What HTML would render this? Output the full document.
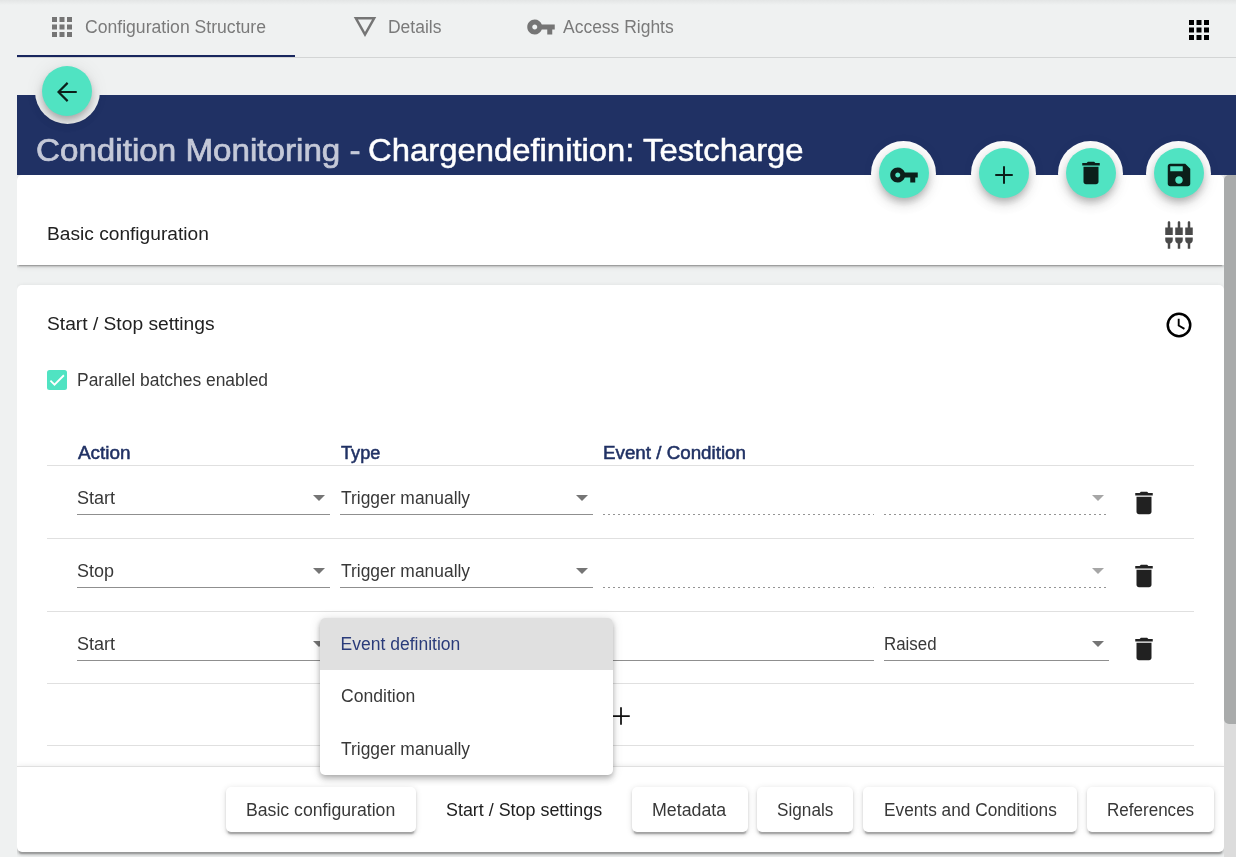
<!DOCTYPE html>
<html lang="en">
<head>
<meta charset="utf-8">
<title>Condition Monitoring - Chargendefinition: Testcharge</title>
<style>
*{box-sizing:border-box;margin:0;padding:0}
html,body{width:1236px;height:857px;overflow:hidden}
body{position:relative;background:#eff1f1;font-family:"Liberation Sans",Arial,sans-serif;font-size:17.5px;color:#333}
.a{position:absolute}
.t{position:absolute;white-space:nowrap;line-height:24px;transform-origin:0 50%;display:block}
svg{position:absolute;display:block;overflow:visible}
.topshade{left:0;top:0;width:1236px;height:5px;background:linear-gradient(#e3e5e5,#eff1f1)}
.tabline{left:17px;top:57px;width:1219px;height:1px;background:#d3d5d5}
.inkbar{left:17px;top:54.75px;width:278px;height:2.5px;background:#18265e}
.header{left:17px;top:95px;width:1219px;height:80px;background:#203164}
.ring{width:65px;height:65px;border-radius:50%}
.fab{width:50px;height:50px;border-radius:50%;background:#50e3c2;box-shadow:0 4px 6px -1px rgba(0,0,0,.18),0 7px 12px 0 rgba(0,0,0,.12),0 1px 20px 0 rgba(0,0,0,.08)}
.panel{background:#fff}
.p1{left:17px;top:175px;width:1207px;height:90px;border-radius:5px 5px 0 0;box-shadow:0 3px 1px -2px rgba(0,0,0,.2),0 2px 2px 0 rgba(0,0,0,.14),0 1px 6px 0 rgba(0,0,0,.12);clip-path:inset(0 0 -20px 0)}
.p2{left:17px;top:285px;width:1207px;height:490px;border-radius:5px 5px 0 0;box-shadow:0 1.25px 5px 0 rgba(0,0,0,.1);clip-path:inset(-20px 0 0 0)}
.track{left:1224px;top:175px;width:12px;height:682px;background:#dcdcdc}
.thumb{left:1224px;top:175px;width:12px;height:549px;background:#a9abab;border-radius:5px 0 0 5px / 5px 0 0 5px}
.hl{left:47px;width:1147px;height:1px;background:#e0e0e0}
.ul{height:1px;background:#8f8f8f}
.dl{height:1px;background-image:linear-gradient(to right,rgba(0,0,0,.42) 0,rgba(0,0,0,.42) 33%,transparent 0);background-size:5px 1px;background-repeat:repeat-x}
.arr{width:0;height:0;border-left:6px solid transparent;border-right:6px solid transparent;border-top:6.5px solid #757575}
.arr.dis{border-top-color:#a6a6a6}
.cb{left:47px;top:370px;width:20px;height:20px;border-radius:2.5px;background:#50e3c2}
.drop{left:320px;top:618px;width:293px;height:157px;background:#fff;border-radius:5px;box-shadow:0 2px 5px -1px rgba(0,0,0,.2),0 5px 6px 0 rgba(0,0,0,.14),0 1px 12px 0 rgba(0,0,0,.12);overflow:hidden}
.drop .sel{left:0;top:0;width:293px;height:52px;background:#e0e0e0}
.bar{left:17px;top:766px;width:1207px;height:86px;background:#fff;border-top:1px solid #e0e0e0;border-radius:0 0 5px 5px;box-shadow:0 3.75px 1.25px -2.5px rgba(0,0,0,.2),0 2.5px 2.5px 0 rgba(0,0,0,.14),0 1.25px 6.25px 0 rgba(0,0,0,.12);clip-path:inset(-5px 0 -20px 0)}
.btn{top:787px;height:45px;background:#fff;border-radius:5px;box-shadow:0 3.75px 1.25px -2.5px rgba(0,0,0,.2),0 2.5px 2.5px 0 rgba(0,0,0,.14),0 1.25px 6.25px 0 rgba(0,0,0,.12)}
</style>
</head>
<body>
<div class="a topshade"></div>
<div class="a tabline"></div>
<div class="a inkbar"></div>

<!-- tab icons -->
<svg style="left:47.2px;top:12.1px" width="30" height="30" viewBox="0 0 24 24" fill="#757575"><path d="M4 8h4V4H4v4zm6 12h4v-4h-4v4zm-6 0h4v-4H4v4zm0-6h4v-4H4v4zm6 0h4v-4h-4v4zm6-10v4h4V4h-4zm-6 4h4V4h-4v4zm6 6h4v-4h-4v4zm0 6h4v-4h-4v4z"/></svg>
<svg style="left:350.1px;top:12.2px" width="30" height="30" viewBox="0 0 24 24" fill="#757575"><path d="M3 4l9 16 9-16H3zm3.38 2h11.25L12 16 6.38 6z"/></svg>
<svg style="left:525.5px;top:12.2px" width="30" height="30" viewBox="0 0 24 24" fill="#757575"><path d="M12.65 10C11.83 7.67 9.61 6 7 6c-3.31 0-6 2.69-6 6s2.69 6 6 6c2.61 0 4.830-1.67 5.65-4H17v4h4v-4h2v-4H12.650zM7 14c-1.1 0-2-.9-2-2s.9-2 2-2 2 .9 2 2-.9 2-2 2z"/></svg>
<svg style="left:1183.5px;top:15px" width="30" height="30" viewBox="0 0 24 24" fill="#000"><path d="M4 8h4V4H4v4zm6 12h4v-4h-4v4zm-6 0h4v-4H4v4zm0-6h4v-4H4v4zm6 0h4v-4h-4v4zm6-10v4h4V4h-4zm-6 4h4V4h-4v4zm6 6h4v-4h-4v4zm0 6h4v-4h-4v4z"/></svg>

<!-- header -->
<div class="a header"></div>
<div class="a ring" style="left:34.5px;top:58.5px;background:#eff1f1"></div>
<div class="a fab" style="left:42px;top:66px"></div>
<svg style="left:52.3px;top:76.9px" width="30" height="30" viewBox="0 0 24 24" fill="none" stroke="#0b1f1a" stroke-width="1.700" stroke-linecap="butt" stroke-linejoin="miter"><path d="M19.800 12H5.200M12.500 4.700L5.200 12l7.300 7.300"/></svg>

<!-- panels -->
<div class="a panel p1"></div>
<div class="a panel p2"></div>
<div class="a track"></div>
<div class="a thumb"></div>

<!-- action fabs -->
<div class="a ring" style="left:870.75px;top:140.8px;background:#fdfdfd"></div>
<div class="a ring" style="left:970.75px;top:140.8px;background:#fdfdfd"></div>
<div class="a ring" style="left:1057.75px;top:140.8px;background:#fdfdfd"></div>
<div class="a ring" style="left:1145.75px;top:140.8px;background:#fdfdfd"></div>
<div class="a fab" style="left:879px;top:148px"></div>
<div class="a fab" style="left:979px;top:148px"></div>
<div class="a fab" style="left:1066px;top:148px"></div>
<div class="a fab" style="left:1154px;top:148px"></div>
<svg style="left:888.7px;top:160.4px" width="30" height="30" viewBox="0 0 24 24" fill="#0b1f1a"><path d="M12.65 10C11.83 7.67 9.61 6 7 6c-3.31 0-6 2.69-6 6s2.69 6 6 6c2.61 0 4.830-1.67 5.65-4H17v4h4v-4h2v-4H12.650zM7 14c-1.1 0-2-.9-2-2s.9-2 2-2 2 .9 2 2-.9 2-2 2z"/></svg>
<svg style="left:988.5px;top:159.9px" width="30" height="30" viewBox="0 0 24 24" fill="none" stroke="#0b1f1a" stroke-width="1.6"><path d="M12 5v14M5 12h14"/></svg>
<svg style="left:1075.9px;top:158.3px" width="30" height="30" viewBox="0 0 24 24" fill="#0b1f1a"><path d="M6 19c0 1.100.9 2 2 2h8c1.100 0 2-.9 2-2V7H6v12zM19 4h-3.500l-1-1h-5l-1 1H5v2h14V4z"/></svg>
<svg style="left:1163.7px;top:160.1px" width="30" height="30" viewBox="0 0 24 24" fill="#0b1f1a"><path d="M17 3H5c-1.110 0-2 .9-2 2v14c0 1.100.89 2 2 2h14c1.100 0 2-.9 2-2V7l-4-4zm-5 16c-1.660 0-3-1.340-3-3s1.340-3 3-3 3 1.340 3 3-1.340 3-3 3zm3-10H5V5h10v4z"/></svg>

<!-- panel icons -->
<svg style="left:1163.8px;top:219.85px" width="30" height="30" viewBox="0 0 24 24" fill="#4a4a4a"><path d="M5 2c0-.55-.45-1-1-1s-1 .45-1 1v4H1v6h6V6H5V2zm4 14c0 1.300.84 2.400 2 2.820V23h2v-4.180c1.160-.41 2-1.510 2-2.820v-2H9v2zm-8 0c0 1.300.84 2.400 2 2.820V23h2v-4.180C6.160 18.400 7 17.300 7 16v-2H1v2zM21 6V2c0-.55-.45-1-1-1s-1 .45-1 1v4h-2v6h6V6h-2zm-8-4c0-.55-.45-1-1-1s-1 .45-1 1v4H9v6h6V6h-2V2zm4 14c0 1.300.84 2.400 2 2.820V23h2v-4.180c1.160-.41 2-1.510 2-2.820v-2h-6v2z"/></svg>
<svg style="left:1164.2px;top:310px" width="30" height="30" viewBox="0 0 24 24" fill="none" stroke="#000"><circle cx="12" cy="12" r="9" stroke-width="2"/><path d="M11.750 7v5.400l4.600 2.700" stroke-width="1.500"/></svg>

<!-- checkbox -->
<div class="a cb"></div>
<svg style="left:47px;top:370px" width="20" height="20" viewBox="0 0 24 24" fill="none" stroke="#fff" stroke-width="2.130"><path d="M4.100 12.700L9 17.600 20.300 6.300"/></svg>

<!-- table lines -->
<div class="a hl" style="top:465px"></div>
<div class="a hl" style="top:538px"></div>
<div class="a hl" style="top:611px"></div>
<div class="a hl" style="top:683px"></div>
<div class="a hl" style="top:745px"></div>

<!-- row 1 -->
<div class="a ul" style="left:77px;top:514px;width:253px"></div>
<div class="a ul" style="left:340px;top:514px;width:253px"></div>
<div class="a dl" style="left:603px;top:514px;width:271px"></div>
<div class="a dl" style="left:884px;top:514px;width:224px"></div>
<div class="a arr" style="left:313px;top:495px"></div>
<div class="a arr" style="left:576px;top:495px"></div>
<div class="a arr dis" style="left:1092px;top:495px"></div>
<!-- row 2 -->
<div class="a ul" style="left:77px;top:587px;width:253px"></div>
<div class="a ul" style="left:340px;top:587px;width:253px"></div>
<div class="a dl" style="left:603px;top:587px;width:271px"></div>
<div class="a dl" style="left:884px;top:587px;width:224px"></div>
<div class="a arr" style="left:313px;top:568px"></div>
<div class="a arr" style="left:576px;top:568px"></div>
<div class="a arr dis" style="left:1092px;top:568px"></div>
<!-- row 3 -->
<div class="a ul" style="left:77px;top:660px;width:253px"></div>
<div class="a ul" style="left:340px;top:660px;width:253px"></div>
<div class="a ul" style="left:603px;top:660px;width:271px"></div>
<div class="a ul" style="left:884px;top:660px;width:225px"></div>
<div class="a arr" style="left:313px;top:641px"></div>
<div class="a arr" style="left:1092px;top:641px"></div>

<!-- delete icons -->
<svg style="left:1128.5px;top:488px" width="30" height="30" viewBox="0 0 24 24" fill="#212121"><path d="M6 19c0 1.100.9 2 2 2h8c1.100 0 2-.9 2-2V7H6v12zM19 4h-3.500l-1-1h-5l-1 1H5v2h14V4z"/></svg>
<svg style="left:1128.5px;top:561px" width="30" height="30" viewBox="0 0 24 24" fill="#212121"><path d="M6 19c0 1.100.9 2 2 2h8c1.100 0 2-.9 2-2V7H6v12zM19 4h-3.500l-1-1h-5l-1 1H5v2h14V4z"/></svg>
<svg style="left:1128.5px;top:634.3px" width="30" height="30" viewBox="0 0 24 24" fill="#212121"><path d="M6 19c0 1.100.9 2 2 2h8c1.100 0 2-.9 2-2V7H6v12zM19 4h-3.500l-1-1h-5l-1 1H5v2h14V4z"/></svg>

<!-- add row plus -->
<svg style="left:605.5px;top:701px" width="30" height="30" viewBox="0 0 24 24" fill="none" stroke="#111" stroke-width="1.400"><path d="M12 5v14M5 12h14"/></svg>


<!-- bottom bar -->
<div class="a bar"></div>
<div class="a btn" style="left:226px;width:190px"></div>
<div class="a btn" style="left:632px;width:115.500px"></div>
<div class="a btn" style="left:757px;width:96px"></div>
<div class="a btn" style="left:863px;width:213.500px"></div>
<div class="a btn" style="left:1086.500px;width:127.500px"></div>

<!-- dropdown -->
<div class="a drop"><div class="a sel"></div></div>
<!-- all text in one transparent layer -->
<div class="a" style="left:0;top:0;width:1236px;height:857px;will-change:transform">
<span class="t" style="left:84.75px;top:15.14px;font-size:17.5px;color:#7a7a7a;transform:scaleX(1.0056);">Configuration Structure</span>
<span class="t" style="left:387.90px;top:15.14px;font-size:17.5px;color:#7a7a7a;transform:scaleX(0.9981);">Details</span>
<span class="t" style="left:563.40px;top:15.14px;font-size:17.5px;color:#7a7a7a;transform:scaleX(0.9986);">Access Rights</span>
<span class="t" style="left:36.47px;top:138.57px;font-size:31.25px;color:#c5c9d8;transform:scaleX(1.0616);-webkit-text-stroke:.7px #c5c9d8;">Condition Monitoring -</span>
<span class="t" style="left:367.99px;top:138.57px;font-size:31.25px;color:#fff;transform:scaleX(1.0506);-webkit-text-stroke:.5px #fff;">Chargendefinition: Testcharge</span>
<span class="t" style="left:46.77px;top:221.90px;font-size:18.75px;color:#212121;transform:scaleX(1.0215);">Basic configuration</span>
<span class="t" style="left:46.98px;top:312.10px;font-size:18.75px;color:#212121;transform:scaleX(1.0241);">Start / Stop settings</span>
<span class="t" style="left:77.20px;top:367.54px;font-size:17.5px;color:#383838;transform:scaleX(0.9968);">Parallel batches enabled</span>
<span class="t" style="left:77.67px;top:440.74px;font-size:17.5px;color:#203164;transform:scaleX(1.0800);-webkit-text-stroke:.5px #203164;">Action</span>
<span class="t" style="left:340.80px;top:440.74px;font-size:17.5px;color:#203164;transform:scaleX(1.0373);-webkit-text-stroke:.5px #203164;">Type</span>
<span class="t" style="left:603.36px;top:440.74px;font-size:17.5px;color:#203164;transform:scaleX(1.0728);-webkit-text-stroke:.5px #203164;">Event / Condition</span>
<span class="t" style="left:76.63px;top:485.94px;font-size:17.5px;color:#383838;transform:scaleX(1.0317);">Start</span>
<span class="t" style="left:340.55px;top:485.94px;font-size:17.5px;color:#383838;transform:scaleX(0.9954);">Trigger manually</span>
<span class="t" style="left:76.63px;top:558.94px;font-size:17.5px;color:#383838;transform:scaleX(1.0261);">Stop</span>
<span class="t" style="left:340.55px;top:558.94px;font-size:17.5px;color:#383838;transform:scaleX(0.9954);">Trigger manually</span>
<span class="t" style="left:76.63px;top:631.94px;font-size:17.5px;color:#383838;transform:scaleX(1.0317);">Start</span>
<span class="t" style="left:884.35px;top:631.94px;font-size:17.5px;color:#383838;transform:scaleX(0.9643);">Raised</span>
<span class="t" style="left:246.49px;top:797.94px;font-size:17.5px;color:#383838;transform:scaleX(1.0093);">Basic configuration</span>
<span class="t" style="left:446.23px;top:797.94px;font-size:17.5px;color:#212121;transform:scaleX(1.0221);">Start / Stop settings</span>
<span class="t" style="left:652.27px;top:797.94px;font-size:17.5px;color:#383838;transform:scaleX(1.0168);">Metadata</span>
<span class="t" style="left:777.16px;top:797.94px;font-size:17.5px;color:#383838;transform:scaleX(0.9821);">Signals</span>
<span class="t" style="left:883.92px;top:797.94px;font-size:17.5px;color:#383838;transform:scaleX(0.9867);">Events and Conditions</span>
<span class="t" style="left:1107.14px;top:797.94px;font-size:17.5px;color:#383838;transform:scaleX(0.9737);">References</span>
<span class="t" style="left:340.60px;top:631.94px;font-size:17.5px;color:#2a3b7a;transform:scaleX(1.0000);">Event definition</span>
<span class="t" style="left:340.75px;top:684.14px;font-size:17.5px;color:#383838;transform:scaleX(1.0042);">Condition</span>
<span class="t" style="left:340.55px;top:736.94px;font-size:17.5px;color:#383838;transform:scaleX(0.9954);">Trigger manually</span>
</div>
</body>
</html>
